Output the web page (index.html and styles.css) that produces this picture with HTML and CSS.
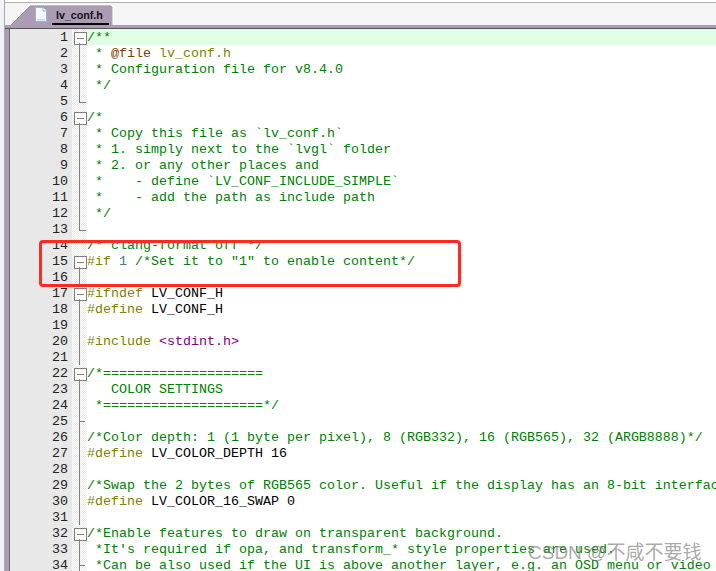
FILE: index.html
```html
<!DOCTYPE html>
<html lang="en">
<head>
<meta charset="utf-8">
<title>lv_conf.h</title>
<link rel="stylesheet" href="styles.css">
</head>
<body>
<div class="app">
  <div class="rail"></div>
  <div class="main">
    <div class="topline"></div>
    <div class="tabbar">
      <div class="tab">
        <svg class="tab-shape" viewBox="0 0 104 22" width="104" height="22"><path d="M0 22 L20 2 H101 L103 4 V22 Z" fill="#ab9bb3"/><path d="M0 22 L20 2 H101 L103 4 V22" fill="none" stroke="#fff" stroke-width="1"/><path d="M1 22 L20.500 3 H101" fill="none" stroke="#8f8f8f" stroke-width="1" stroke-dasharray="1 1"/></svg>
        <svg class="doc-icon" viewBox="0 0 12 15" width="12" height="15"><path d="M.5.500H8L11.500 4V14.500H.5Z" fill="#f4f8fd" stroke="#9fb2cc"/><path d="M8 .5V4H11.500" fill="#fff" stroke="#9fb2cc"/><path d="M2 12H10V13.500H2Z" fill="#c8d6ea"/></svg>
        <span class="tab-label">lv_conf.h</span>
      </div>
    </div>
    <div class="strip"></div>
    <div class="frame">
      <div class="editor">
        <div class="line current"><span class="num">1</span><span class="fold box"></span><code class="c">/**</code></div>
        <div class="line"><span class="num">2</span><span class="fold bar"></span><code class="c"> * <span class="tag">@file</span> <span class="ref">lv_conf.h</span></code></div>
        <div class="line"><span class="num">3</span><span class="fold bar"></span><code class="c"> * Configuration file for v8.4.0</code></div>
        <div class="line"><span class="num">4</span><span class="fold bar"></span><code class="c"> */</code></div>
        <div class="line"><span class="num">5</span><span class="fold end"></span><code class="c"></code></div>
        <div class="line"><span class="num">6</span><span class="fold box"></span><code class="c">/*</code></div>
        <div class="line"><span class="num">7</span><span class="fold bar"></span><code class="c"> * Copy this file as `lv_conf.h`</code></div>
        <div class="line"><span class="num">8</span><span class="fold bar"></span><code class="c"> * 1. simply next to the `lvgl` folder</code></div>
        <div class="line"><span class="num">9</span><span class="fold bar"></span><code class="c"> * 2. or any other places and</code></div>
        <div class="line"><span class="num">10</span><span class="fold bar"></span><code class="c"> *    - define `LV_CONF_INCLUDE_SIMPLE`</code></div>
        <div class="line"><span class="num">11</span><span class="fold bar"></span><code class="c"> *    - add the path as include path</code></div>
        <div class="line"><span class="num">12</span><span class="fold bar"></span><code class="c"> */</code></div>
        <div class="line"><span class="num">13</span><span class="fold end"></span><code class="c"></code></div>
        <div class="line"><span class="num">14</span><span class="fold"></span><code class="c">/* clang-format off */</code></div>
        <div class="line"><span class="num">15</span><span class="fold box"></span><code class="c"><span class="pp">#if</span> <span class="lit">1</span> /*Set it to "1" to enable content*/</code></div>
        <div class="line"><span class="num">16</span><span class="fold bar"></span><code class="c"></code></div>
        <div class="line"><span class="num">17</span><span class="fold box"></span><code class="k"><span class="pp">#ifndef</span> LV_CONF_H</code></div>
        <div class="line"><span class="num">18</span><span class="fold bar"></span><code class="k"><span class="pp">#define</span> LV_CONF_H</code></div>
        <div class="line"><span class="num">19</span><span class="fold bar"></span><code class="k"></code></div>
        <div class="line"><span class="num">20</span><span class="fold bar"></span><code class="k"><span class="pp">#include</span> <span class="inc">&lt;stdint.h&gt;</span></code></div>
        <div class="line"><span class="num">21</span><span class="fold bar"></span><code class="k"></code></div>
        <div class="line"><span class="num">22</span><span class="fold box"></span><code class="c">/*====================</code></div>
        <div class="line"><span class="num">23</span><span class="fold bar"></span><code class="c">   COLOR SETTINGS</code></div>
        <div class="line"><span class="num">24</span><span class="fold bar"></span><code class="c"> *====================*/</code></div>
        <div class="line"><span class="num">25</span><span class="fold bar tick"></span><code class="c"></code></div>
        <div class="line"><span class="num">26</span><span class="fold bar"></span><code class="c">/*Color depth: 1 (1 byte per pixel), 8 (RGB332), 16 (RGB565), 32 (ARGB8888)*/</code></div>
        <div class="line"><span class="num">27</span><span class="fold bar"></span><code class="k"><span class="pp">#define</span> LV_COLOR_DEPTH 16</code></div>
        <div class="line"><span class="num">28</span><span class="fold bar"></span><code class="k"></code></div>
        <div class="line"><span class="num">29</span><span class="fold bar"></span><code class="c">/*Swap the 2 bytes of RGB565 color. Useful if the display has an 8-bit interface.*/</code></div>
        <div class="line"><span class="num">30</span><span class="fold bar"></span><code class="k"><span class="pp">#define</span> LV_COLOR_16_SWAP 0</code></div>
        <div class="line"><span class="num">31</span><span class="fold bar"></span><code class="k"></code></div>
        <div class="line"><span class="num">32</span><span class="fold box"></span><code class="c">/*Enable features to draw on transparent background.</code></div>
        <div class="line"><span class="num">33</span><span class="fold bar"></span><code class="c"> *It's required if opa, and transform_* style properties are used.</code></div>
        <div class="line"><span class="num">34</span><span class="fold bar tick"></span><code class="c"> *Can be also used if the UI is above another layer, e.g. an OSD menu or video player.</code></div>
      </div>
    </div>
  </div>
  <div class="highlight"></div>
  <div class="watermark">CSDN @不咸不要钱</div>
</div>
</body>
</html>
```
FILE: styles.css
```css
* { box-sizing: border-box; }
html, body { margin: 0; padding: 0; background: #fff; }
.app { position: relative; display: flex; width: 716px; height: 571px; overflow: hidden; }
.rail { flex: 0 0 5px; background: #f0f2f6; border-right: 1px solid #a8a8a8; }
.main { flex: 1; min-width: 0; display: flex; flex-direction: column; }
.topline { flex: 0 0 3px; border-bottom: 1px solid #b0b0b0; background: #fff; }
.tabbar { flex: 0 0 22px; background: #f5f5f5; padding-left: 5px; }
.tab { position: relative; width: 104px; height: 22px; display: flex; align-items: flex-start; padding: 4px 0 0 25px; }
.tab-shape { position: absolute; left: 0; top: 0; }
.doc-icon { position: relative; flex: none; }
.tab-label { position: relative; margin-left: 5px; padding: 1px 6px 0 4px; height: 18px; font: bold 10.67px/15px "Liberation Sans", Arial, sans-serif; color: #111; border-bottom: 2px solid #000; }
.strip { flex: 0 0 4px; background: #ab9bb3; border-bottom: 1px solid #555; }
.frame { flex: 1; min-height: 0; background: #ab9bb3; padding-left: 4px; }
.editor { height: 100%; background: #fff; border-left: 1px solid #666; overflow: hidden; }
.line { display: flex; height: 16px; }
.num { flex: 0 0 62px; background: #e8e8e8; padding: 1px 4px 0 0; text-align: right; font: 13.33px/15px "Liberation Mono", "Courier New", monospace; color: #222; }
.fold { position: relative; flex: 0 0 15px; background: repeating-conic-gradient(#fff 0 25%, #ececec 0 50%) 0 0 / 2px 2px; }
.bar::before, .box::after, .end::before { content: ""; position: absolute; left: 7px; width: 1px; background: #808080; }
.bar::before { top: 0; bottom: 0; }
.end::before { top: 0; height: 9px; width: 6px; border-left: 1px solid #808080; border-bottom: 1px solid #808080; background: none; }
.box::before { content: ""; position: absolute; left: 2px; top: 3px; width: 11px; height: 11px; background: linear-gradient(#808080, #808080) center / 7px 1px no-repeat #fff; border: 1px solid #808080; }
.box::after { top: 14px; bottom: 0; }
.tick::after { content: ""; position: absolute; left: 8px; top: 8px; width: 5px; height: 1px; background: #808080; }
code { flex: 1; min-width: 0; padding-top: 1px; white-space: pre; overflow: hidden; font: 13.33px/15px "Liberation Mono", "Courier New", monospace; }
.current code { background: #e0ffe4; }
.c { color: #008000; }
.k { color: #000; }
.tag { color: #804000; }
.ref { color: #808000; }
.pp { color: #808000; }
.lit { color: #408080; }
.inc { color: #800080; }
.highlight { position: absolute; left: 39px; top: 240px; width: 422px; height: 47px; border: 3px solid #ff2a20; border-radius: 4px; }
.watermark { position: absolute; left: 528px; top: 540px; font: 19px/26px "Liberation Sans", "Noto Sans CJK SC", sans-serif; color: rgba(120, 120, 120, 0.65); white-space: nowrap; }
```
